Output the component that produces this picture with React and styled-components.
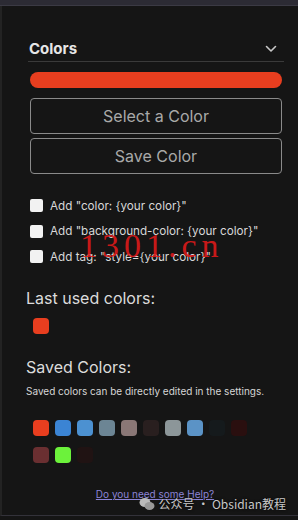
import React from "react";
import styled, { createGlobalStyle } from "styled-components";

const Global = createGlobalStyle`
  html, body { margin: 0; padding: 0; background: #151515; }
  body { font-family: Inter, "Noto Sans", sans-serif; width: 298px; height: 520px; overflow: hidden; }
`;

const Frame = styled.div`
  position: relative;
  width: 298px;
  height: 520px;
  display: flex;
  flex-direction: column;
  background: #151515;
  overflow: hidden;
`;

const TopStrip = styled.div`
  height: 5px;
  background: #2c2b34;
  border-bottom: 1px solid #3b3a44;
  flex: none;
`;

const Panel = styled.div`
  flex: 1;
  display: flex;
  flex-direction: column;
  padding: 32px 14px 0 24px;
  border-left: 2px solid #232323;
  border-bottom: 1px solid #33323a;
  margin-bottom: 4px;
  background: #151515;
`;

const Header = styled.div`
  display: flex;
  align-items: center;
  justify-content: space-between;
  height: 22px;
  padding: 0 7px 1px 1px;
  border-bottom: 1px solid #3a3a3a;
  margin-left: 2px;
`;

const Title = styled.h2`
  margin: 0;
  font-size: 15px;
  font-weight: 700;
  color: #e6e6e6;
  line-height: 20px;
`;

const Body = styled.div`
  display: flex;
  flex-direction: column;
  padding: 0 2px 0 4px;
`;

const ColorBar = styled.div`
  margin-top: 10px;
  height: 16px;
  border-radius: 8px;
  background: #e83e1f;
`;

const Button = styled.button`
  margin-top: ${(p) => p.$gap}px;
  height: 36px;
  border: 1px solid #8a8a8a;
  border-radius: 4px;
  background: transparent;
  color: #a9a9a9;
  font-family: Inter, "Noto Sans", sans-serif;
  font-size: 16px;
  padding: 0;
  cursor: pointer;
`;

const Options = styled.div`
  display: flex;
  flex-direction: column;
  gap: 12.5px;
  margin-top: 25px;
`;

const Option = styled.label`
  display: flex;
  align-items: center;
  gap: 7px;
  height: 13px;
  font-size: 11.7px;
  color: #d8d8d8;
  white-space: nowrap;
`;

const Box = styled.span`
  width: 13px;
  height: 13px;
  border-radius: 2px;
  background: #f2f2f2;
  flex: none;
`;

const Section = styled.h3`
  margin: ${(p) => p.$top}px 0 0 0;
  font-size: 16px;
  font-weight: 400;
  color: #dcdcdc;
  line-height: 20px;
`;

const Swatches = styled.div`
  display: flex;
  flex-wrap: wrap;
  gap: 11px 6px;
  margin: ${(p) => p.$top}px 0 0 7px;
  width: 222px;
`;

const Swatch = styled.span`
  width: 16px;
  height: 16px;
  border-radius: 4px;
  background: ${(p) => p.$c};
`;

const Hint = styled.p`
  margin: 8px 0 0 0;
  font-size: 10px;
  color: #d6d6d6;
  line-height: 13px;
`;

const Help = styled.a`
  align-self: center;
  margin-top: 24px;
  font-size: 10px;
  color: #8c84d6;
  text-decoration: underline;
  line-height: 14px;
`;

const Stamp = styled.div`
  position: absolute;
  left: 80px;
  top: 229px;
  font-family: "Liberation Serif", "DejaVu Serif", serif;
  font-size: 34px;
  line-height: 34px;
  color: #dc1a1a;
  opacity: 0.9;
  letter-spacing: 5px;
  pointer-events: none;
`;

const Mark = styled.div`
  position: absolute;
  right: 12px;
  bottom: 8px;
  display: flex;
  align-items: center;
  gap: 4px;
  font-family: "Noto Sans CJK SC", "Noto Sans", sans-serif;
  font-size: 12px;
  color: #c8c8c8;
  text-shadow: 0 0 3px #000;
  pointer-events: none;
`;

const saved = [
  "#e83e1f", "#3b84d4", "#4c91d1", "#6c8594", "#8a7776", "#291f1f",
  "#8c9699", "#5b93c6", "#151a1c", "#2a0f0f", "#6a2f31", "#6cf23b", "#201313",
];

export default function App() {
  return (
    <Frame>
      <Global />
      <TopStrip />
      <Panel>
        <Header>
          <Title>Colors</Title>
          <svg width="12" height="8" viewBox="0 0 12 8" fill="none">
            <path d="M1.5 1.5 L6 6 L10.5 1.5" stroke="#c8c8c8" strokeWidth="1.6" strokeLinecap="round" strokeLinejoin="round" />
          </svg>
        </Header>
        <Body>
          <ColorBar />
          <Button $gap={10}>Select a Color</Button>
          <Button $gap={4}>Save Color</Button>
          <Options>
            <Option><Box />Add "color: {"{your color}"}"</Option>
            <Option><Box />Add "background-color: {"{your color}"}"</Option>
            <Option><Box />Add tag: "style={"{your color}"}"</Option>
          </Options>
        </Body>
        <Section $top={25}>Last used colors:</Section>
        <Swatches $top={10}>
          <Swatch $c="#e83e1f" />
        </Swatches>
        <Section $top={23}>Saved Colors:</Section>
        <Hint>Saved colors can be directly edited in the settings.</Hint>
        <Swatches $top={22}>
          {saved.map((c, i) => <Swatch key={i} $c={c} />)}
        </Swatches>
        <Help href="#">Do you need some Help?</Help>
      </Panel>
      <Stamp>1301.cn</Stamp>
      <Mark>
        <svg width="16" height="14" viewBox="0 0 16 14">
          <ellipse cx="6" cy="5.5" rx="5.5" ry="4.5" fill="#bbb" />
          <ellipse cx="10.5" cy="9" rx="5" ry="4" fill="#999" />
        </svg>
        公众号 · Obsidian教程
      </Mark>
    </Frame>
  );
}
